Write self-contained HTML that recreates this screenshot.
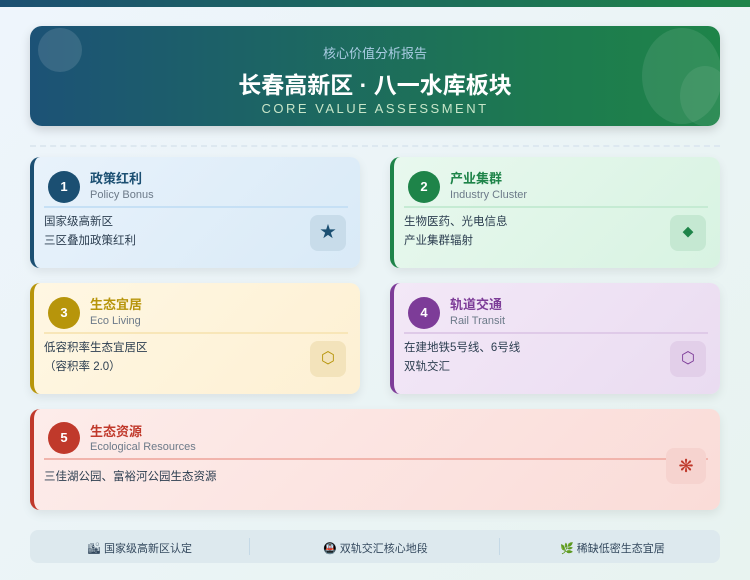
<!DOCTYPE html>
<html><head><meta charset="utf-8"><style>
*{margin:0;padding:0;box-sizing:border-box}
body{width:750px;height:580px;overflow:hidden;background:linear-gradient(135deg,#eef5fc,#e8f3f0);font-family:"Liberation Sans","Noto Sans CJK SC",sans-serif;position:relative}
.top{position:absolute;left:0;top:0;width:750px;height:7px;background:linear-gradient(90deg,#1b4f72,#1e8449)}
.hdr{position:absolute;left:30px;top:26px;width:690px;height:100px;border-radius:12px;background:linear-gradient(90deg,#1c5276,#1d7a4f 75%,#1e8449);box-shadow:0 4px 10px rgba(0,0,0,.15);overflow:hidden;text-align:center;color:#fff}
.c1{position:absolute;left:8px;top:2px;width:44px;height:44px;border-radius:50%;background:rgba(255,255,255,.12)}
.c2{position:absolute;left:612px;top:2px;width:80px;height:96px;border-radius:50%;background:rgba(255,255,255,.09)}
.c3{position:absolute;left:650px;top:40px;width:50px;height:60px;border-radius:50%;background:rgba(255,255,255,.08)}
.h1{position:absolute;top:17px;width:100%;font-size:13px;color:#a9cce3}
.h2{position:absolute;top:40px;width:100%;font-size:23px;font-weight:bold}
.h3{position:absolute;top:75px;width:100%;font-size:13px;letter-spacing:2.5px;color:#c8e6c9}
.dash{position:absolute;left:30px;top:145px;width:690px;border-top:2px dashed #dde8f0}
.card{position:absolute;border-radius:10px;border-left:4px solid;box-shadow:0 4px 10px rgba(0,0,0,.08)}
.num{position:absolute;left:14px;top:14px;width:32px;height:32px;border-radius:50%;color:#fff;font-weight:bold;font-size:13px;text-align:center;line-height:32px}
.t{position:absolute;left:56px;top:11px;font-size:13px;font-weight:bold}
.s{position:absolute;left:56px;top:32px;font-size:11px;color:#6c7a89}
.ln{position:absolute;left:10px;right:12px;top:49px;height:2px}
.b{position:absolute;left:10px;top:56px;font-size:11.5px;line-height:19px;color:#2c3e50}
.ic{position:absolute;width:36px;height:36px;border-radius:8px;text-align:center;line-height:36px;font-size:16px}
.ft{position:absolute;left:30px;top:530px;width:690px;height:33px;border-radius:8px;background:#dde9ee;font-size:11px;color:#34495e}
.ft span{position:absolute;top:10px}
.sep{position:absolute;top:8px;width:1px;height:17px;background:#c5d9e6}
</style></head><body>
<div class="top"></div>
<div class="hdr"><div class="c1"></div><div class="c2"></div><div class="c3"></div>
<div class="h1">核心价值分析报告</div><div class="h2">长春高新区 · 八一水库板块</div><div class="h3">CORE VALUE ASSESSMENT</div></div>
<div class="dash"></div>

<div class="card" style="left:30px;top:157px;width:330px;height:111px;border-color:#1b4f72;background:linear-gradient(135deg,#e8f2fb,#d9eaf7)">
<div class="num" style="background:#1b4f72">1</div><div class="t" style="color:#1b4f72">政策红利</div><div class="s">Policy Bonus</div><div class="ln" style="background:#c6e0f5"></div>
<div class="b">国家级高新区<br>三区叠加政策红利</div><div class="ic" style="left:276px;top:58px;background:#c8dcea;color:#1b4f72">★</div></div>

<div class="card" style="left:390px;top:157px;width:330px;height:111px;border-color:#1e8449;background:linear-gradient(135deg,#e8f8ee,#d8f3e2)">
<div class="num" style="background:#1e8449">2</div><div class="t" style="color:#1e8449">产业集群</div><div class="s">Industry Cluster</div><div class="ln" style="background:#c5ebd3"></div>
<div class="b">生物医药、光电信息<br>产业集群辐射</div><div class="ic" style="left:276px;top:58px;background:#c5e8d2;color:#1e8449;font-size:11px">◆</div></div>

<div class="card" style="left:30px;top:283px;width:330px;height:111px;border-color:#b7950b;background:linear-gradient(135deg,#fff7e3,#fdf0d3)">
<div class="num" style="background:#b7950b">3</div><div class="t" style="color:#b7950b">生态宜居</div><div class="s">Eco Living</div><div class="ln" style="background:#f8e6b8"></div>
<div class="b">低容积率生态宜居区<br>（容积率 2.0）</div><div class="ic" style="left:276px;top:58px;background:#f3e3bb;color:#b7950b">⬡</div></div>

<div class="card" style="left:390px;top:283px;width:330px;height:111px;border-color:#7d3c98;background:linear-gradient(135deg,#f3e8f7,#eadcf1)">
<div class="num" style="background:#7d3c98">4</div><div class="t" style="color:#7d3c98">轨道交通</div><div class="s">Rail Transit</div><div class="ln" style="background:#dfcae8"></div>
<div class="b">在建地铁5号线、6号线<br>双轨交汇</div><div class="ic" style="left:276px;top:58px;background:#e2cfe9;color:#7d3c98">⬡</div></div>

<div class="card" style="left:30px;top:409px;width:690px;height:101px;border-color:#c0392b;background:linear-gradient(135deg,#fdecea,#fadcd8)">
<div class="num" style="background:#c0392b;left:14px;top:13px">5</div><div class="t" style="color:#c0392b;top:12px">生态资源</div><div class="s" style="top:32px">Ecological Resources</div><div class="ln" style="background:#f1b4ac;top:49px"></div>
<div class="b" style="top:59px">三佳湖公园、富裕河公园生态资源</div><div class="ic" style="left:632px;top:39px;width:40px;background:#f6d3cf;color:#c0392b;font-size:18px">❋</div></div>

<div class="ft"><span style="left:57px">🏙 国家级高新区认定</span><div class="sep" style="left:219px"></div><span style="left:293px">🚇 双轨交汇核心地段</span><div class="sep" style="left:469px"></div><span style="left:530px">🌿 稀缺低密生态宜居</span></div>
</body></html>
